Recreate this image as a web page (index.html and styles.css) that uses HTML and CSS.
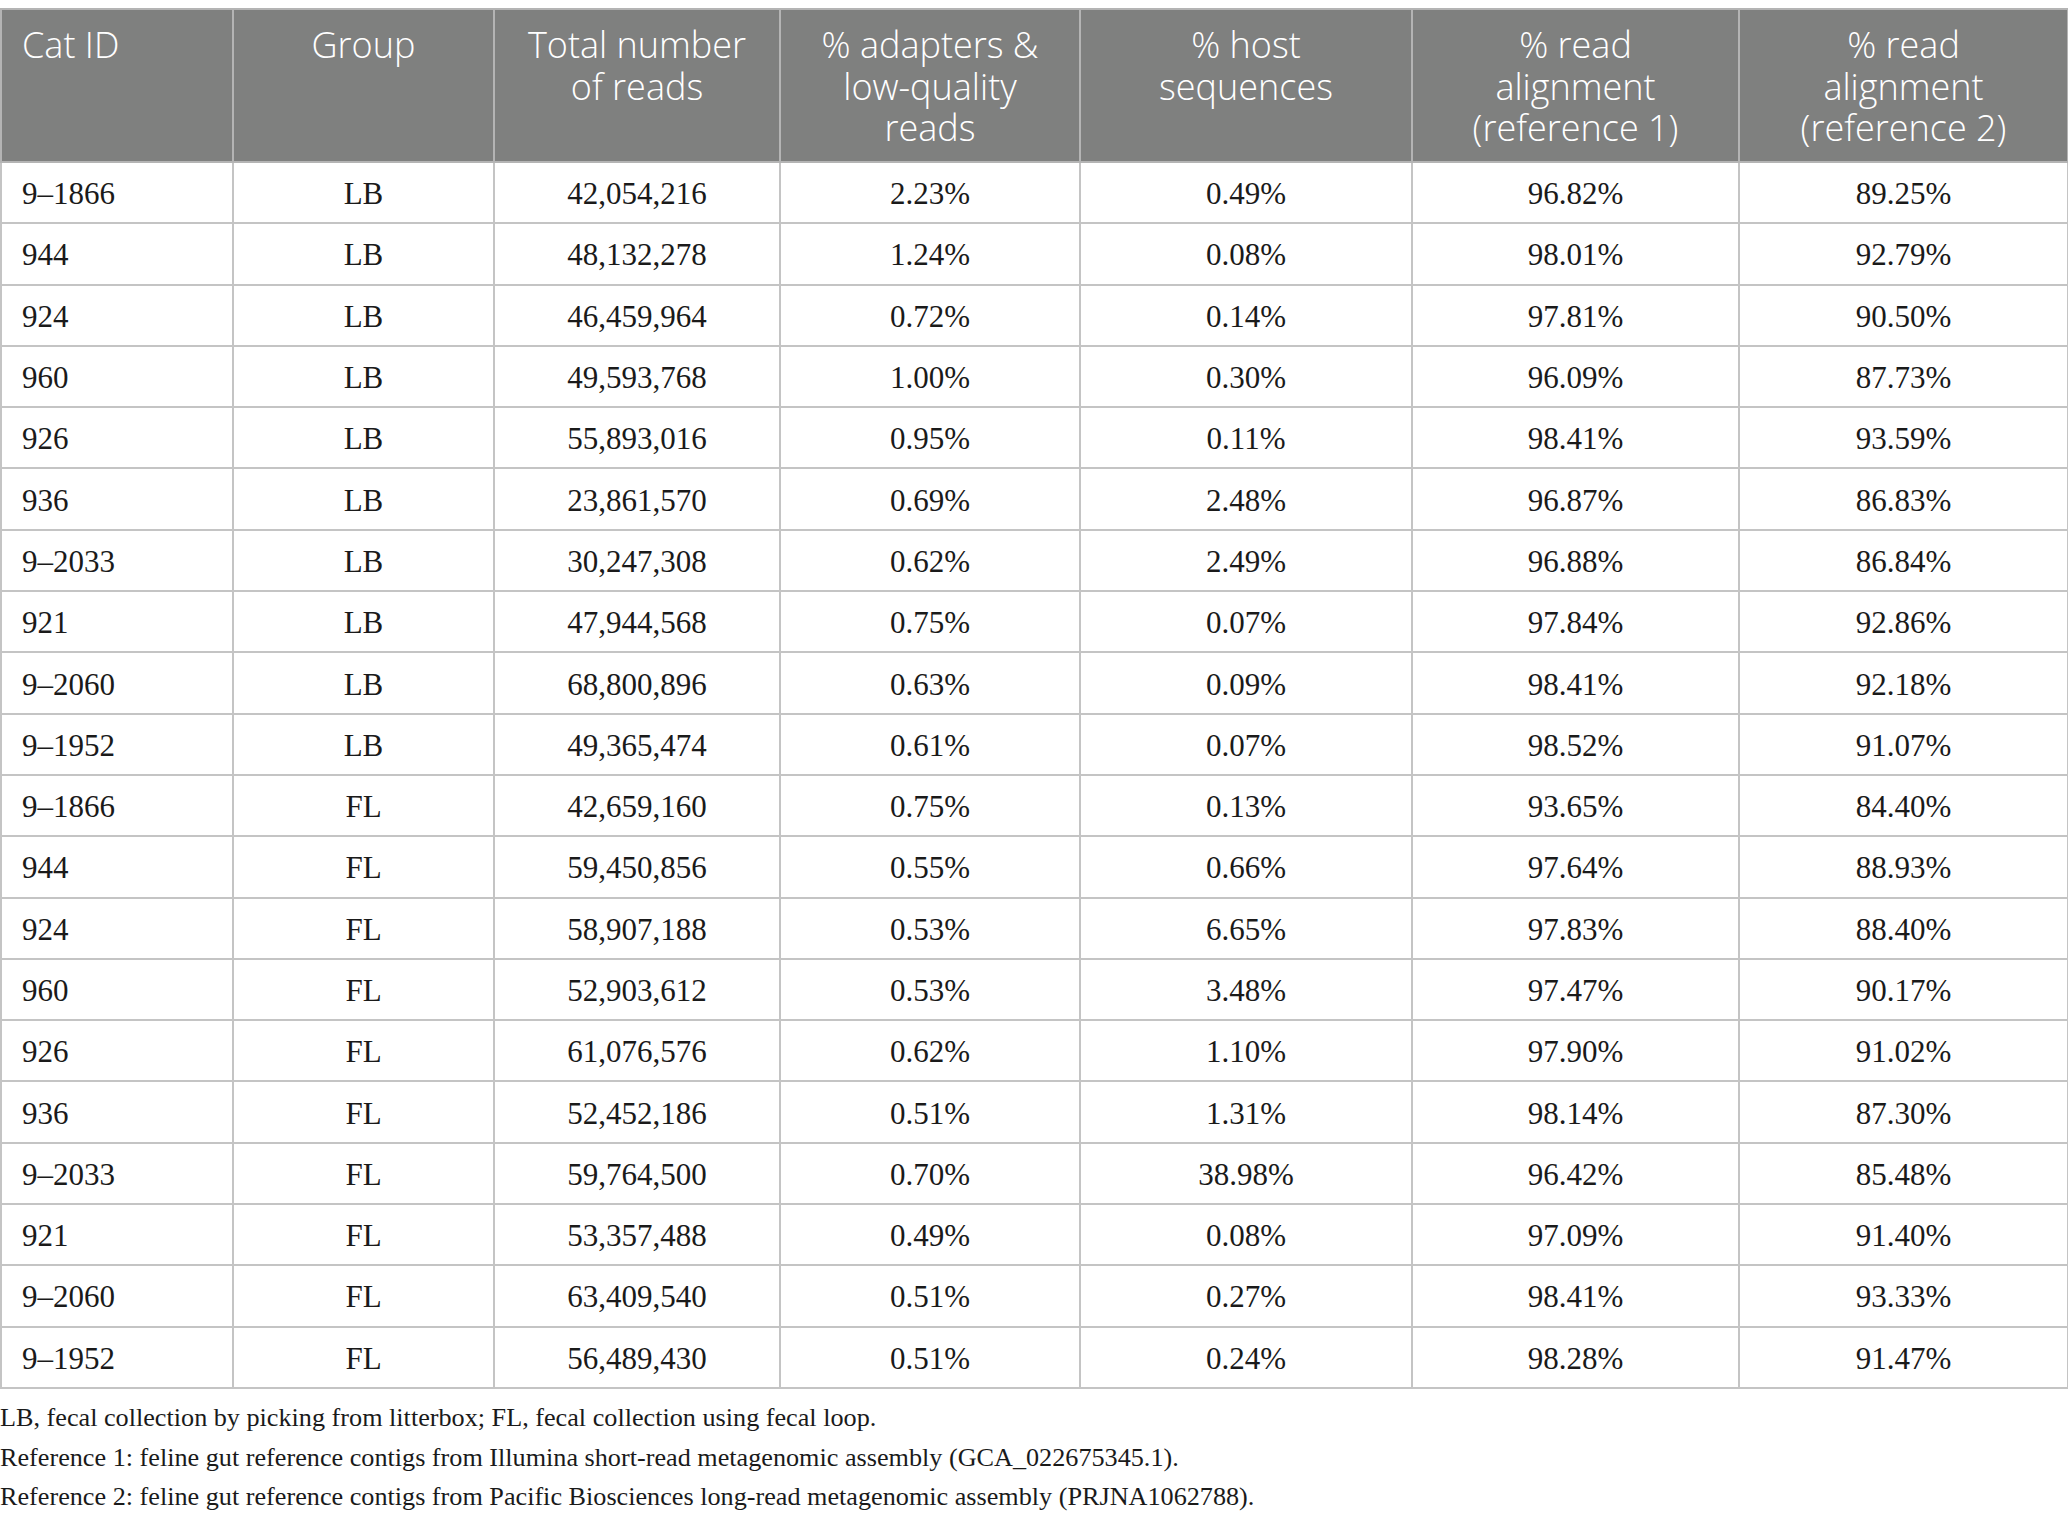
FILE: index.html
```html
<!DOCTYPE html>
<html>
<head>
<meta charset="utf-8">
<link rel="stylesheet" href="styles.css">
</head>
<body>
<div class="page">
<table class="data">
<colgroup>
<col class="c1"><col class="c2"><col class="c3"><col class="c4"><col class="c5"><col class="c6"><col class="c7">
</colgroup>
<thead>
<tr>
<th class="left">Cat ID</th>
<th>Group</th>
<th>Total number<br>of reads</th>
<th>% adapters &amp;<br>low-quality<br>reads</th>
<th>% host<br>sequences</th>
<th>% read<br>alignment<br>(reference 1)</th>
<th>% read<br>alignment<br>(reference 2)</th>
</tr>
</thead>
<tbody>
<tr><td class="left">9–1866</td><td>LB</td><td>42,054,216</td><td>2.23%</td><td>0.49%</td><td>96.82%</td><td>89.25%</td></tr>
<tr><td class="left">944</td><td>LB</td><td>48,132,278</td><td>1.24%</td><td>0.08%</td><td>98.01%</td><td>92.79%</td></tr>
<tr><td class="left">924</td><td>LB</td><td>46,459,964</td><td>0.72%</td><td>0.14%</td><td>97.81%</td><td>90.50%</td></tr>
<tr><td class="left">960</td><td>LB</td><td>49,593,768</td><td>1.00%</td><td>0.30%</td><td>96.09%</td><td>87.73%</td></tr>
<tr><td class="left">926</td><td>LB</td><td>55,893,016</td><td>0.95%</td><td>0.11%</td><td>98.41%</td><td>93.59%</td></tr>
<tr><td class="left">936</td><td>LB</td><td>23,861,570</td><td>0.69%</td><td>2.48%</td><td>96.87%</td><td>86.83%</td></tr>
<tr><td class="left">9–2033</td><td>LB</td><td>30,247,308</td><td>0.62%</td><td>2.49%</td><td>96.88%</td><td>86.84%</td></tr>
<tr><td class="left">921</td><td>LB</td><td>47,944,568</td><td>0.75%</td><td>0.07%</td><td>97.84%</td><td>92.86%</td></tr>
<tr><td class="left">9–2060</td><td>LB</td><td>68,800,896</td><td>0.63%</td><td>0.09%</td><td>98.41%</td><td>92.18%</td></tr>
<tr><td class="left">9–1952</td><td>LB</td><td>49,365,474</td><td>0.61%</td><td>0.07%</td><td>98.52%</td><td>91.07%</td></tr>
<tr><td class="left">9–1866</td><td>FL</td><td>42,659,160</td><td>0.75%</td><td>0.13%</td><td>93.65%</td><td>84.40%</td></tr>
<tr><td class="left">944</td><td>FL</td><td>59,450,856</td><td>0.55%</td><td>0.66%</td><td>97.64%</td><td>88.93%</td></tr>
<tr><td class="left">924</td><td>FL</td><td>58,907,188</td><td>0.53%</td><td>6.65%</td><td>97.83%</td><td>88.40%</td></tr>
<tr><td class="left">960</td><td>FL</td><td>52,903,612</td><td>0.53%</td><td>3.48%</td><td>97.47%</td><td>90.17%</td></tr>
<tr><td class="left">926</td><td>FL</td><td>61,076,576</td><td>0.62%</td><td>1.10%</td><td>97.90%</td><td>91.02%</td></tr>
<tr><td class="left">936</td><td>FL</td><td>52,452,186</td><td>0.51%</td><td>1.31%</td><td>98.14%</td><td>87.30%</td></tr>
<tr><td class="left">9–2033</td><td>FL</td><td>59,764,500</td><td>0.70%</td><td>38.98%</td><td>96.42%</td><td>85.48%</td></tr>
<tr><td class="left">921</td><td>FL</td><td>53,357,488</td><td>0.49%</td><td>0.08%</td><td>97.09%</td><td>91.40%</td></tr>
<tr><td class="left">9–2060</td><td>FL</td><td>63,409,540</td><td>0.51%</td><td>0.27%</td><td>98.41%</td><td>93.33%</td></tr>
<tr><td class="left">9–1952</td><td>FL</td><td>56,489,430</td><td>0.51%</td><td>0.24%</td><td>98.28%</td><td>91.47%</td></tr>
</tbody>
</table>
<div class="notes">
<p>LB, fecal collection by picking from litterbox; FL, fecal collection using fecal loop.</p>
<p>Reference 1: feline gut reference contigs from Illumina short-read metagenomic assembly (GCA_022675345.1).</p>
<p>Reference 2: feline gut reference contigs from Pacific Biosciences long-read metagenomic assembly (PRJNA1062788).</p>
</div>
</div>
</body>
</html>
```
FILE: styles.css
```css
html, body {
  margin: 0;
  padding: 0;
  background: #ffffff;
}
.page {
  padding-top: 8px;
  width: 2068px;
}
.data {
  border-collapse: collapse;
  width: 2067px;
  table-layout: fixed;
  font-family: "Liberation Serif", "Times New Roman", serif;
  font-size: 31px;
  color: #1a1a1a;
}
.c1 { width: 232px; }
.c2 { width: 261px; }
.c3 { width: 286px; }
.c4 { width: 300px; }
.c5 { width: 332px; }
.c6 { width: 327px; }
.c7 { width: 329px; }
.data th {
  background: #7f807f;
  color: #ffffff;
  font-family: "Open Sans", "Noto Sans", sans-serif;
  font-weight: 300;
  font-size: 36px;
  line-height: 41.5px;
  height: 153px;
  box-sizing: border-box;
  padding: 14px 8px 0;
  vertical-align: top;
  text-align: center;
  border: 2px solid #b4b4b4;
}
.data td {
  height: 57.3px;
  padding: 2px 10px 0;
  text-align: center;
  vertical-align: middle;
  border: 2px solid #c4c4c4;
  line-height: 1;
}
.data th.left, .data td.left {
  text-align: left;
  padding-left: 20px;
}
.notes {
  font-family: "Liberation Serif", "Times New Roman", serif;
  font-size: 26.2px;
  color: #1a1a1a;
  padding-top: 9px;
}
.notes p {
  margin: 0;
  line-height: 39.6px;
}
```
